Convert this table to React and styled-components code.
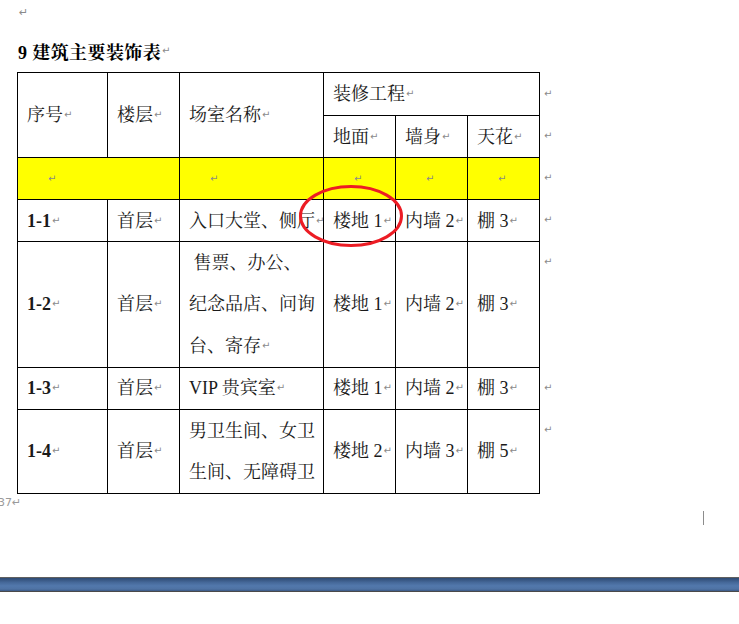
import React from 'react';
import styled, { createGlobalStyle } from 'styled-components';

const GlobalStyle = createGlobalStyle`
  html, body {
    margin: 0;
    padding: 0;
    background: #fff;
  }
  body {
    width: 739px;
    height: 624px;
    overflow: hidden;
    font-family: "Liberation Serif", "Noto Serif CJK SC", "Noto Sans CJK SC", serif;
    color: #000;
  }
`

const Page = styled.div`
  position: relative;
  width: 739px;
  height: 624px;
`

const Sheet = styled.div`
  padding-left: 17px;
`

const Mark = styled.span`
  font-family: "DejaVu Sans", sans-serif;
  font-size: ${p => p.size || 10}px;
  line-height: 1;
  font-weight: normal;
  color: #8a8a8a;
  margin-left: 1px;
`

const TopLine = styled.div`
  height: 24px;
  display: flex;
  align-items: center;
  padding-left: 1px;
`

const Title = styled.h1`
  margin: 16px 0 10px;
  padding-left: 1px;
  height: 22px;
  display: flex;
  align-items: center;
  font-size: 18px;
  font-weight: bold;
  letter-spacing: 0.4px;
`

const TableWrap = styled.div`
  position: relative;
`

const Table = styled.table`
  border-collapse: collapse;
  table-layout: fixed;
  width: 545px;
  font-size: 18px;
`

const Row = styled.tr`
  background: ${p => (p.yellow ? '#ffff00' : 'transparent')};
`

const Cell = styled.td`
  border: 1px solid #000;
  padding: 0 0 0 ${p => p.pad || 9}px;
  vertical-align: middle;
  white-space: nowrap;
  overflow: hidden;
  color: #1a1a1a;
  font-weight: ${p => (p.bold ? 'bold' : 'normal')};
`

const Line = styled.div`
  height: ${p => p.h || 41}px;
  display: flex;
  align-items: center;
  line-height: 1;
`

const Outside = styled.td`
  border: none;
  background: #fff;
  padding: 0 0 0 3px;
  vertical-align: top;
`

const Circle = styled.svg`
  position: absolute;
  left: 281px;
  top: 111px;
  pointer-events: none;
`

const PageNum = styled.div`
  margin-left: -19px;
  height: 17px;
  display: flex;
  align-items: center;
  font-family: "DejaVu Sans", sans-serif;
  font-size: 11px;
  color: #9a9a9a;
`

const Caret = styled.div`
  margin-left: 686px;
  width: 1px;
  height: 14px;
  background: #8c8c8c;
`

const StatusBar = styled.div`
  margin-top: 52px;
  height: 13px;
  border-top: 1px solid #606060;
  border-bottom: 1px solid #4a4a4a;
  background: linear-gradient(to bottom, #2e4a73 0%, #46699a 35%, #5278ac 60%, #4f73a4 85%, #3b5986 100%);
`

const P = () => <Mark>↵</Mark>

const Text = ({ children, h, mark = true }) => (
  <Line h={h}>{children}{mark && <P />}</Line>
)

const rows = [
  { no: '1-1', floor: '首层', room: ['入口大堂、侧厅'], ground: '楼地 1', wall: '内墙 2', ceil: '棚 3', h: 41 },
  { no: '1-2', floor: '首层', room: ['\u00a0售票、办公、', '纪念品店、问询', '台、寄存'], ground: '楼地 1', wall: '内墙 2', ceil: '棚 3', h: 125 },
  { no: '1-3', floor: '首层', room: ['VIP 贵宾室'], ground: '楼地 1', wall: '内墙 2', ceil: '棚 3', h: 41 },
  { no: '1-4', floor: '首层', room: ['男卫生间、女卫', '生间、无障碍卫'], ground: '楼地 2', wall: '内墙 3', ceil: '棚 5', h: 83, noMark: true },
];

export default function App() {
  return (
    <Page>
      <GlobalStyle />
      <Sheet>
        <TopLine><Mark size={11}>↵</Mark></TopLine>
        <Title>9 建筑主要装饰表<P /></Title>
        <TableWrap>
          <Table>
            <colgroup>
              <col style={{ width: 90 }} />
              <col style={{ width: 72 }} />
              <col style={{ width: 144 }} />
              <col style={{ width: 72 }} />
              <col style={{ width: 72 }} />
              <col style={{ width: 72 }} />
              <col style={{ width: 23 }} />
            </colgroup>
            <tbody>
              <Row>
                <Cell rowSpan={2}><Text>序号</Text></Cell>
                <Cell rowSpan={2}><Text>楼层</Text></Cell>
                <Cell rowSpan={2}><Text>场室名称</Text></Cell>
                <Cell colSpan={3}><Text h={42}>装修工程</Text></Cell>
                <Outside><Text h={42} mark={false}><P /></Text></Outside>
              </Row>
              <Row>
                <Cell><Text>地面</Text></Cell>
                <Cell><Text>墙身</Text></Cell>
                <Cell><Text>天花</Text></Cell>
                <Outside><Text mark={false}><P /></Text></Outside>
              </Row>
              <Row yellow>
                <Cell colSpan={2} pad={29}><Text mark={false}><P /></Text></Cell>
                <Cell pad={29}><Text mark={false}><P /></Text></Cell>
                <Cell pad={29}><Text mark={false}><P /></Text></Cell>
                <Cell pad={29}><Text mark={false}><P /></Text></Cell>
                <Cell pad={29}><Text mark={false}><P /></Text></Cell>
                <Outside><Text mark={false}><P /></Text></Outside>
              </Row>
              {rows.map(r => (
                <Row key={r.no}>
                  <Cell bold><Text>{r.no}</Text></Cell>
                  <Cell><Text>{r.floor}</Text></Cell>
                  <Cell>
                    {r.room.map((line, i) => (
                      <Text key={i} h={r.h / r.room.length} mark={!r.noMark && i === r.room.length - 1}>{line}</Text>
                    ))}
                  </Cell>
                  <Cell><Text>{r.ground}</Text></Cell>
                  <Cell><Text>{r.wall}</Text></Cell>
                  <Cell><Text>{r.ceil}</Text></Cell>
                  <Outside><Text h={r.h / r.room.length} mark={false}><P /></Text></Outside>
                </Row>
              ))}
            </tbody>
          </Table>
          <Circle width="106" height="66" viewBox="0 0 106 66">
            <ellipse cx="53" cy="33" rx="50.5" ry="29.5" fill="none" stroke="#ec1c24" strokeWidth="3" />
          </Circle>
        </TableWrap>
        <PageNum>37↵</PageNum>
        <Caret />
      </Sheet>
      <StatusBar />
    </Page>
  );
}
